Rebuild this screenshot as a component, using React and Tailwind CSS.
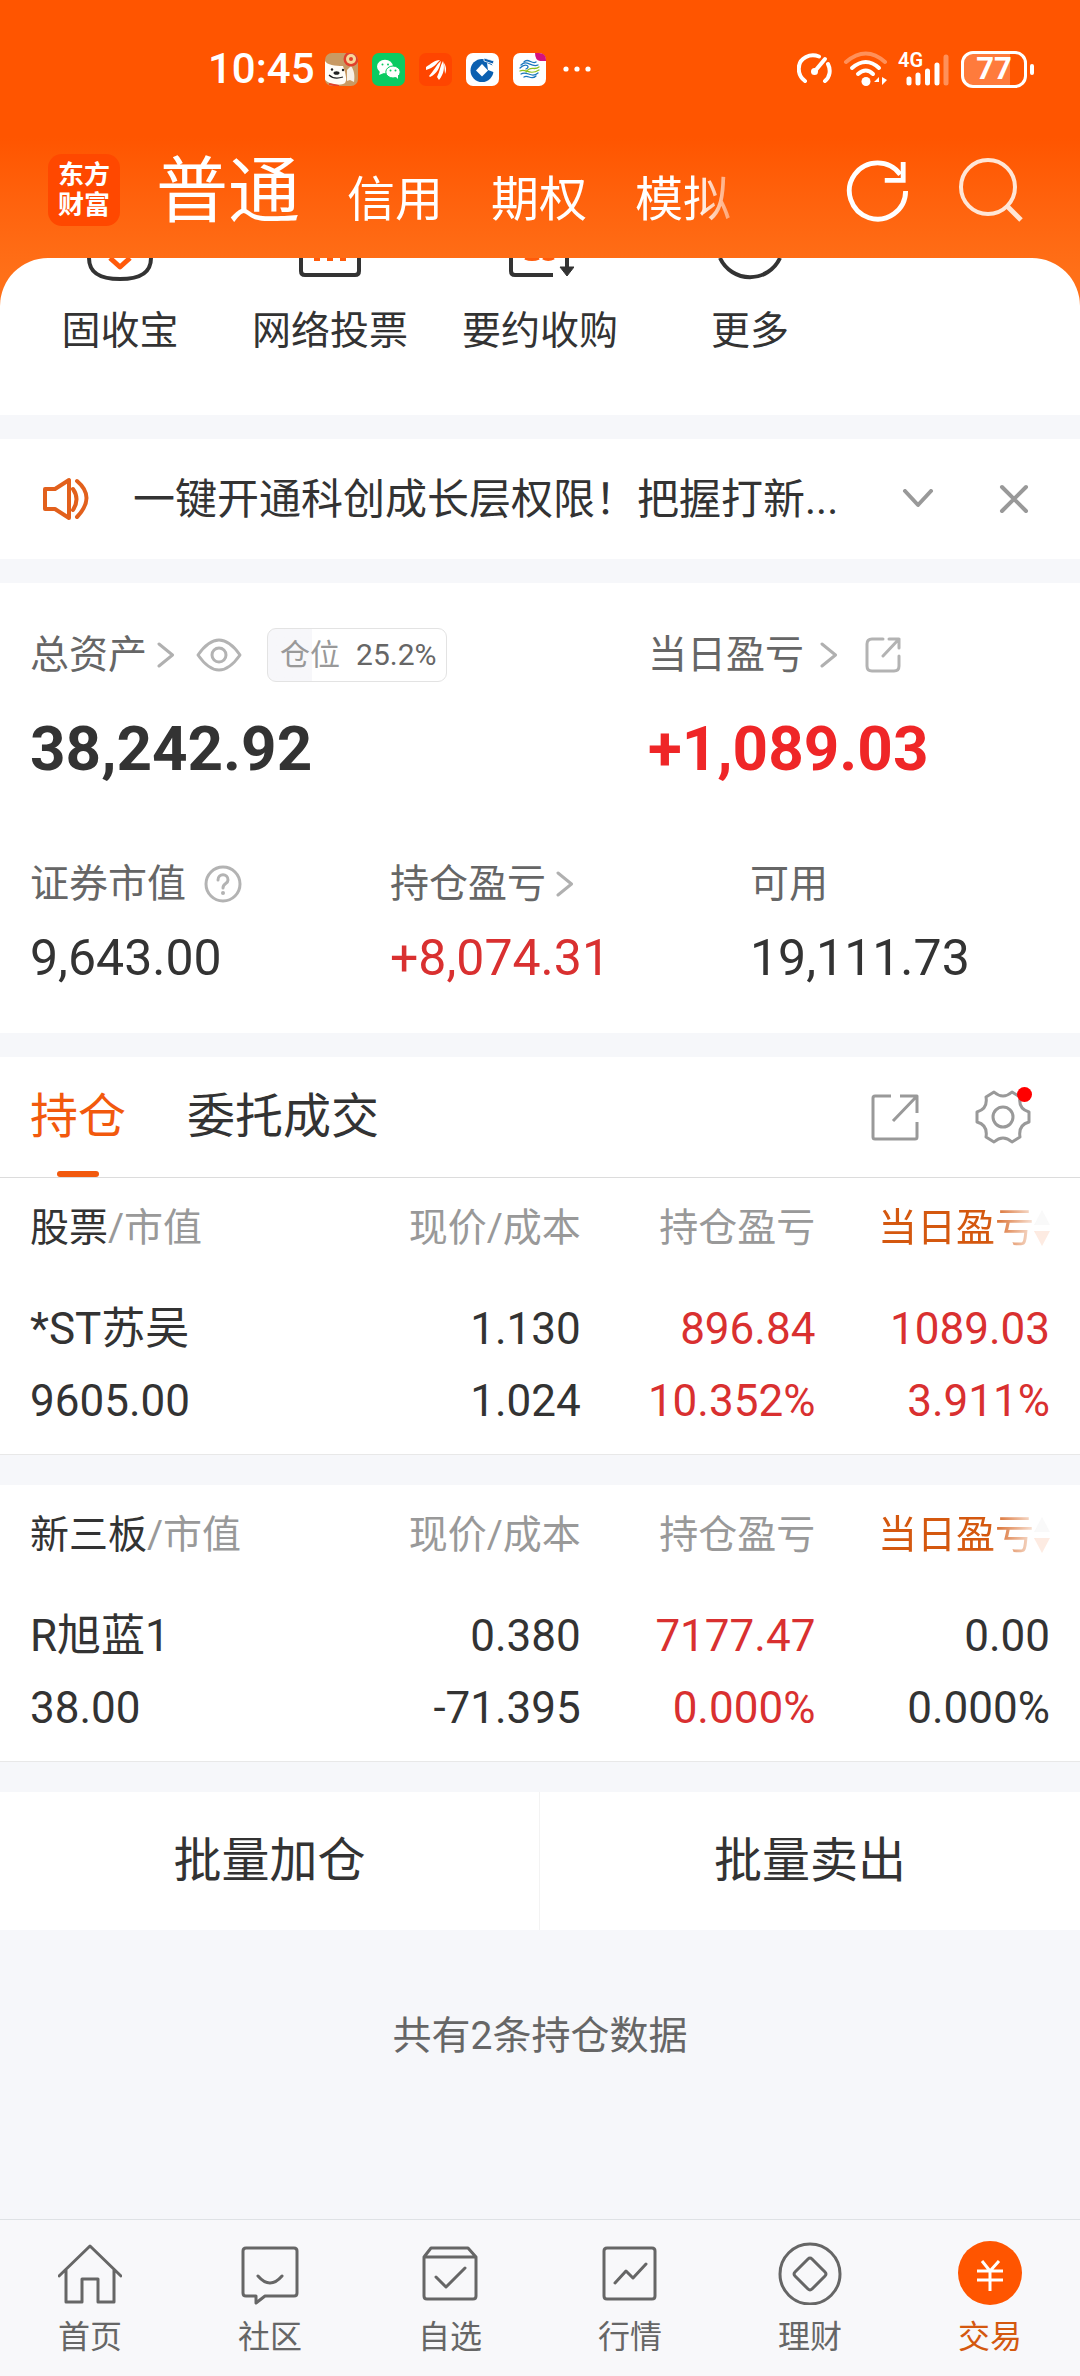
import React from "react";

const stroke = { fill: "none", strokeLinecap: "round", strokeLinejoin: "round" };

function Chevron() {
  return (
    <svg viewBox="0 0 18 26" className="h-[26px] w-[18px] shrink-0" stroke="#b0b0b0" strokeWidth="3" {...stroke}>
      <path d="M2 2 L15.5 13 L2 24" />
    </svg>
  );
}

function StatusBar() {
  return (
    <div className="flex h-[138px] items-center pr-[46px] pl-[208px] text-white">
      <time className="w-[108px] text-[42px] leading-[48px] font-medium">10:45</time>
      <div className="ml-[9px] flex items-center gap-[14px]">
        <svg viewBox="0 0 33 33" className="size-[33px]">
          <defs>
            <clipPath id="dog"><rect width="33" height="33" rx="7" /></clipPath>
          </defs>
          <g clipPath="url(#dog)">
            <rect width="33" height="33" fill="#c99a63" />
            <path d="M0 8 C2 12 10 13 18 13 L20 19 C21 24 22 27 20 30 C16 33 5 32 0 27Z" fill="#fffdf8" />
            <path d="M22 17 L26 13 C29 17 30 22 29 29 L25 27 L22 28Z" fill="#f8f1e8" />
            <circle cx="26" cy="6" r="7.5" fill="#e2402c" />
            <circle cx="26" cy="6" r="5" fill="#f6d79a" />
            <circle cx="26" cy="6" r="2" fill="#e2402c" />
            <ellipse cx="11.500" cy="20" rx="3" ry="1.800" fill="#222" />
            <circle cx="7" cy="16.500" r="1.200" fill="#222" />
            <circle cx="18" cy="17" r="1.200" fill="#222" />
            <path d="M4 22 Q9 27 18 24" stroke="#222" strokeWidth="1.200" fill="none" />
            <path d="M4 31 L14 33" stroke="#e2402c" strokeWidth="2" />
          </g>
        </svg>
        <svg viewBox="0 0 33 33" className="size-[33px]">
          <rect width="33" height="33" rx="7" fill="#0bcb62" />
          <ellipse cx="13" cy="13.500" rx="8" ry="6.800" fill="#fff" />
          <path d="M8 18 L7 22 L12 20Z" fill="#fff" />
          <ellipse cx="21" cy="19" rx="7.200" ry="6" fill="#fff" stroke="#0bcb62" />
          <path d="M23 23 L26 26 L26 22Z" fill="#fff" />
          <circle cx="10.500" cy="11.500" r="1" fill="#0bcb62" />
          <circle cx="16" cy="11.500" r="1" fill="#0bcb62" />
          <circle cx="18.500" cy="17.500" r="1" fill="#0bcb62" />
          <circle cx="23.500" cy="17.500" r="1" fill="#0bcb62" />
        </svg>
        <svg viewBox="0 0 33 33" className="size-[33px]">
          <rect width="33" height="33" rx="7" fill="#ff4500" />
          <g fill="#fff">
            <path d="M7 14 C12 11 15 7 21 7 C18 10 15 15 7 17Z" />
            <path d="M10 23 C15 18 17 12 22 8 C21 14 18 21 11 24Z" />
            <path d="M18 24 C21 18 21 13 24 8 C26 14 25 21 20 27Z" />
            <path d="M25 10 C28 14 27 19 26 21Z" />
          </g>
        </svg>
        <svg viewBox="0 0 33 33" className="size-[33px]">
          <rect width="33" height="33" rx="7" fill="#fff" />
          <circle cx="16" cy="17.500" r="11.500" fill="#0a5fb0" />
          <path d="M21 10 L30 14 L30 20 L22 17Z" fill="#fff" />
          <path d="M16 11 L22 17.500 L16 23.500 L10 17.500Z" fill="#fff" />
          <path d="M18 5 L28 8 L27 11 L18 8Z" fill="#0a5fb0" stroke="#fff" strokeWidth="0.800" />
        </svg>
        <svg viewBox="0 0 33 33" className="size-[33px]">
          <rect width="33" height="33" rx="7" fill="#fff" />
          <path d="M22 0 H26 Q33 0 33 7 V8 H27 Q22 7 22 0Z" fill="#d5127e" />
          <g fill="none" strokeWidth="1.300" strokeLinecap="round">
            <path d="M11 9 C15 4 19 12 23 9" stroke="#1b78bf" />
            <path d="M8 12 C14 6 18 15 25 12" stroke="#1b78bf" />
            <path d="M7 15 C13 9 18 14 13 16" stroke="#1b78bf" />
            <path d="M13 19 C18 12 21 18 26 14" stroke="#8cc220" />
            <path d="M7 18 C13 15 16 23 26 17" stroke="#8cc220" />
            <path d="M8 21 C14 17 18 26 25 20" stroke="#1b78bf" />
            <path d="M11 24 C15 21 18 28 23 23" stroke="#1b78bf" />
          </g>
        </svg>
      </div>
      <svg viewBox="0 0 28 6" className="ml-[17px] h-[6px] w-[28px]" fill="#fff">
        <circle cx="3" cy="3" r="2.600" /><circle cx="14" cy="3" r="2.600" /><circle cx="25" cy="3" r="2.600" />
      </svg>
      <div className="ml-auto flex items-center">
        <svg viewBox="0 0 36 32" className="h-[32px] w-[36px]" stroke="#fff" strokeWidth="4" {...stroke}>
          <path d="M8 28 C0 22 -1 9 9 4 C13 2 18 2 22 3.500 M31 11 C34 17 33 24 28 28" />
          <path d="M28 6 L18 18" strokeWidth="4" />
          <circle cx="17.500" cy="18.500" r="3.500" fill="#fff" stroke="none" />
        </svg>
        <svg viewBox="0 0 46 36" className="ml-[10px] h-[36px] w-[46px]" stroke="#fff" strokeWidth="4" {...stroke}>
          <path d="M3 11 Q23 -6 42 11" opacity="0.35" />
          <path d="M9 17 Q23 5 36 17" />
          <path d="M15 23 Q23 16 30 23" />
          <circle cx="23" cy="30.500" r="4.500" fill="#fff" stroke="none" />
          <path d="M36 26 L31 31 H36Z M39 26 V34 L44 29Z" fill="#fff" stroke="none" />
        </svg>
        <div className="relative ml-[8px] h-[36px] w-[52px]">
          <svg viewBox="0 0 52 36" className="h-full w-full" stroke="#fff" strokeWidth="5" strokeLinecap="round">
            <path d="M12 28 V32 M21 24 V32 M30.500 20 V32 M40 14 V32" />
            <path d="M49 6 V32" opacity="0.350" />
          </svg>
          <span className="absolute -top-[1px] left-[1px] text-[20px] leading-[20px] font-semibold">4G</span>
        </div>
        <div className="ml-[12px] flex h-[37px] w-[66px] items-center justify-center rounded-[12px] border-[3px] border-white bg-linear-to-r from-[#ff7b3c] from-77% to-transparent to-77% text-[31px] leading-[32px] font-bold">
          77
        </div>
        <span className="ml-[3px] h-[11px] w-[4px] rounded-full bg-white" />
      </div>
    </div>
  );
}

function AppHeader() {
  return (
    <header className="bg-linear-to-b from-[#ff5500] from-45% to-[#ff7018] to-90% pb-[48px]">
      <StatusBar />
      <div className="flex h-[120px] items-center pr-[56px] pl-[48px] text-white">
        <div className="-mt-[16px] flex size-[72px] flex-col items-center justify-center rounded-[14px] bg-[#ff4800] text-[26px] leading-[30px] font-bold">
          <span>东方</span>
          <span>财富</span>
        </div>
        <nav className="-mt-[12px] ml-[36px] flex items-baseline [mask-image:linear-gradient(to_right,black_94%,rgba(0,0,0,0.4))]">
          <a href="#normal" className="mr-[47px] text-[72px] leading-[120px]">普通</a>
          <a href="#credit" className="mr-[48px] text-[48px]">信用</a>
          <a href="#options" className="mr-[48px] text-[48px]">期权</a>
          <a href="#paper" className="text-[48px]">模拟</a>
        </nav>
        <button type="button" aria-label="刷新" className="-mt-[16px] ml-auto">
          <svg viewBox="0 0 66 66" className="size-[64px]" fill="none" stroke="#fff" strokeWidth="5">
            <path d="M62.500 34 A29 29 0 1 1 57 17" />
            <path d="M60 4 V23 H41" />
          </svg>
        </button>
        <button type="button" aria-label="搜索" className="-mt-[14px] ml-[49px]">
          <svg viewBox="0 0 66 66" className="size-[66px]" fill="none" stroke="#ffe6d6" strokeWidth="4">
            <circle cx="30" cy="29" r="27" />
            <path d="M49 48 L63 62" strokeWidth="5" />
          </svg>
        </button>
      </div>
    </header>
  );
}

const shortcuts = [
  {
    label: "固收宝",
    icon: (
      <>
        <path d="M3 0 C3 15 14 21 34 21 C54 21 65 15 65 0" stroke="#333" />
        <path d="M24 0 L34 9 L44 0" stroke="#ff5a0a" strokeWidth="5" />
      </>
    ),
  },
  {
    label: "网络投票",
    icon: (
      <>
        <path d="M5 0 V13 Q5 17 9 17 H59 Q63 17 63 13 V0" stroke="#333" />
        <path d="M21 0 V3 M34 0 V3 M47 0 V3" stroke="#ff5a0a" strokeWidth="6" />
      </>
    ),
  },
  {
    label: "要约收购",
    icon: (
      <>
        <path d="M5 0 V13 Q5 17 9 17 H47" stroke="#333" />
        <path d="M19 0 Q26 3 33 0 M37 0 Q42 3 48 0" stroke="#ff5a0a" strokeWidth="3" />
        <path d="M61 0 V12" stroke="#333" />
        <path d="M54 9 H68 L61 18Z" fill="#333" stroke="#333" strokeWidth="1" />
      </>
    ),
  },
  { label: "更多", icon: <path d="M4 0 A33 33 0 0 0 64 0" stroke="#333" /> },
];

function Shortcuts() {
  return (
    <section className="-mt-[48px] grid h-[157px] grid-cols-5 rounded-t-[48px] bg-white px-[15px]">
      {shortcuts.map((s) => (
        <a key={s.label} href="#service" className="flex flex-col items-center text-[39px] leading-[48px] text-[#333]">
          <svg viewBox="0 0 68 24" className="mb-[25px] h-[24px] w-[68px]" strokeWidth="4" {...stroke} strokeLinecap="butt">
            {s.icon}
          </svg>
          {s.label}
        </a>
      ))}
    </section>
  );
}

function Notice() {
  return (
    <section className="mt-[24px] flex h-[120px] items-center bg-white pr-[50px] pl-[42px]">
      <svg viewBox="0 0 48 44" className="h-[44px] w-[48px]" stroke="#e2601c" strokeWidth="4" {...stroke}>
        <path d="M3 12 H13 L27 3 V41 L13 32 H3Z" />
        <path d="M31 12 Q38 22 31 33 M35 4 Q54 20 35 40" />
      </svg>
      <p className="ml-[43px] pt-[2px] text-[42px] leading-[60px] whitespace-nowrap">一键开通科创成长层权限！把握打新...</p>
      <button type="button" aria-label="展开" className="ml-auto">
        <svg viewBox="0 0 32 20" className="h-[20px] w-[32px]" stroke="#999" strokeWidth="4" {...stroke}>
          <path d="M3 2 L16 16 L29 2" />
        </svg>
      </button>
      <button type="button" aria-label="关闭" className="ml-[64px]">
        <svg viewBox="0 0 32 32" className="size-[32px]" stroke="#999" strokeWidth="4" {...stroke}>
          <path d="M4 4 L28 28 M28 4 L4 28" />
        </svg>
      </button>
    </section>
  );
}

function Assets() {
  return (
    <section className="mt-[24px] bg-white pt-[42px] pb-[45px]">
      <div className="flex">
        <div className="w-3/5 pl-[30px]">
          <div className="flex h-[60px] items-center text-[39px] leading-[60px] text-[#666]">
            <a href="#assets" className="flex items-center gap-[10px]">
              总资产
              <Chevron />
            </a>
            <button type="button" aria-label="显示金额" className="ml-[21px]">
              <svg viewBox="0 0 46 34" className="h-[34px] w-[46px]" stroke="#b3b3b3" strokeWidth="3" {...stroke}>
                <path d="M2 17 Q23 -13 44 17 Q23 47 2 17Z" />
                <circle cx="23" cy="17" r="7" />
              </svg>
            </button>
            <div className="ml-[25px] flex h-[54px] items-center gap-[16px] rounded-[9px] border border-[#e3e3e3] bg-linear-to-r from-[#f7f7fa] from-25% to-white to-25% pr-[10px] pl-[12px] text-[30px] leading-[52px]">
              <span className="text-[#999]">仓位</span>
              <span>25.2%</span>
            </div>
          </div>
          <p className="mt-[28px] text-[62px] leading-[72px] font-bold">38,242.92</p>
        </div>
        <div className="w-2/5">
          <div className="flex h-[60px] items-center text-[39px] leading-[60px] text-[#666]">
            <a href="#today" className="flex items-center gap-[16px]">
              当日盈亏
              <Chevron />
            </a>
            <button type="button" aria-label="分享" className="ml-[27px]">
              <svg viewBox="0 0 36 36" className="size-[36px]" stroke="#b3b3b3" strokeWidth="3" {...stroke}>
                <path d="M18 2 H7 Q2 2 2 7 V29 Q2 34 7 34 H29 Q34 34 34 29 V19 M24 2 H34 V11 M34 2 L18 19" />
              </svg>
            </button>
          </div>
          <p className="mt-[28px] text-[62px] leading-[72px] font-bold text-[#ef2627]">+1,089.03</p>
        </div>
      </div>
      <div className="mt-[69px] grid grid-cols-3">
        <div className="pl-[30px]">
          <div className="flex h-[60px] items-center gap-[18px] text-[39px] text-[#666]">
            证券市值
            <button type="button" aria-label="说明">
              <svg viewBox="0 0 38 38" className="size-[38px]" stroke="#b3b3b3" strokeWidth="3" {...stroke}>
                <circle cx="19" cy="19" r="17" />
                <path d="M14 15 C14 8 24 8 24 15 C24 19 19 18 19 23" />
                <circle cx="19" cy="28" r="2" fill="#b3b3b3" stroke="none" />
              </svg>
            </button>
          </div>
          <p className="mt-[14px] text-[50px] leading-[60px]">9,643.00</p>
        </div>
        <div className="pl-[30px]">
          <a href="#pnl" className="flex h-[60px] items-center gap-[10px] text-[39px] text-[#666]">
            持仓盈亏
            <Chevron />
          </a>
          <p className="mt-[14px] text-[50px] leading-[60px] text-[#d93030]">+8,074.31</p>
        </div>
        <div className="pl-[30px]">
          <div className="flex h-[60px] items-center text-[39px] text-[#666]">可用</div>
          <p className="mt-[14px] text-[50px] leading-[60px]">19,111.73</p>
        </div>
      </div>
    </section>
  );
}

function HoldingTabs() {
  return (
    <div className="mt-[24px] flex h-[121px] items-center border-b border-[#dcdcdc] bg-white pr-[48px] pl-[30px] text-[48px] leading-[120px]">
      <button type="button" className="relative text-[#f2590d]">
        持仓
        <span className="absolute bottom-0 left-1/2 h-[6px] w-[42px] -translate-x-1/2 rounded-full bg-[#f2590d]" />
      </button>
      <button type="button" className="ml-[61px]">委托成交</button>
      <button type="button" aria-label="分享持仓" className="ml-auto">
        <svg viewBox="0 0 48 48" className="size-[48px]" fill="none" stroke="#999" strokeWidth="3" strokeLinejoin="round">
          <path d="M20 3 H4 Q2 3 2 5 V44 Q2 46 4 46 H44 Q46 46 46 44 V29 M29 3 H46 V20 M46 3 L22 28" />
        </svg>
      </button>
      <button type="button" aria-label="设置" className="relative ml-[55px]">
        <svg viewBox="-29 -29 58 58" className="size-[58px]" stroke="#999" strokeWidth="3" {...stroke}>
          <path d="M-9 -25 Q0 -17 9 -25 L17 -20 Q15 -8 26 -5 V5 Q15 8 17 20 L9 25 Q0 17 -9 25 L-17 20 Q-15 8 -26 5 V-5 Q-15 -8 -17 -20Z" />
          <circle r="10" />
        </svg>
        <span className="absolute -top-[1px] right-0 size-[15px] rounded-full bg-[#f00]" />
      </button>
    </div>
  );
}

const groups = [
  {
    title: "股票",
    rows: [
      ["*ST苏吴", "1.130", "896.84", "1089.03"],
      ["9605.00", "1.024", "10.352%", "3.911%"],
    ],
    todayUp: true,
  },
  {
    title: "新三板",
    rows: [
      ["R旭蓝1", "0.380", "7177.47", "0.00"],
      ["38.00", "-71.395", "0.000%", "0.000%"],
    ],
    todayUp: false,
  },
];

function Holdings({ group }) {
  const [top, bottom] = group.rows;
  const today = group.todayUp ? "text-[#d93030]" : "";
  return (
    <section className="border-b border-[#e8e8e8] bg-white px-[30px] pb-[17px]">
      <table className="w-full table-fixed text-right text-[44px] leading-[72px]">
        <thead>
          <tr className="h-[108px] text-[39px] leading-[100px] text-[#999]">
            <th className="w-[28%] pb-[8px] text-left font-normal"><span className="text-[#333]">{group.title}</span>/市值</th>
            <th className="w-[26%] pb-[8px] font-normal">现价/成本</th>
            <th className="w-[23%] pb-[8px] font-normal">持仓盈亏</th>
            <th className="w-[23%] pb-[8px] font-normal text-[#d4580f]">
              <button type="button" className="inline-flex items-center [mask-image:linear-gradient(to_right,black_64%,rgba(0,0,0,0.12)_92%)]">
                当日盈亏
                <svg viewBox="0 0 16 36" className="h-[36px] w-[16px]">
                  <path d="M8 0 L16 15 H0Z" fill="#ccc" />
                  <path d="M8 36 L16 21 H0Z" fill="#f2590d" />
                </svg>
              </button>
            </th>
          </tr>
        </thead>
        <tbody>
          <tr className="h-[79px]">
            <td className="p-0 pt-[7px] text-left">{top[0]}</td>
            <td className="p-0 pt-[7px]">{top[1]}</td>
            <td className="p-0 pt-[7px] text-[#d93030]">{top[2]}</td>
            <td className={`p-0 pt-[7px] ${today}`}>{top[3]}</td>
          </tr>
          <tr className="h-[72px]">
            <td className="p-0 text-left">{bottom[0]}</td>
            <td className="p-0">{bottom[1]}</td>
            <td className="p-0 text-[#d93030]">{bottom[2]}</td>
            <td className={`p-0 ${today}`}>{bottom[3]}</td>
          </tr>
        </tbody>
      </table>
    </section>
  );
}

const tabs = [
  { label: "首页", icon: <path d="M1 35 L32 5 L63 35 M8 29 V61 H24 V38 H40 V61 H56 V29" /> },
  { label: "社区", icon: <path d="M8 7 H56 Q59 7 59 10 V52 Q59 55 56 55 H27 L18 62 V55 H8 Q5 55 5 52 V10 Q5 7 8 7Z M20 35 Q32 49 44 35" /> },
  { label: "自选", icon: <path d="M6 16 L13 7 H50 L58 16 V55 Q58 58 55 58 H9 Q6 58 6 55Z M6 16 H58 M18 36 L28 46 L47 27" /> },
  { label: "行情", icon: <path d="M9 7 H54 Q57 7 57 10 V55 Q57 58 54 58 H9 Q6 58 6 55 V10 Q6 7 9 7Z M17 42 L28 30 L35 37 L48 23" /> },
  { label: "理财", icon: <><circle cx="32" cy="33" r="30" /><path d="M30 18 Q32 16 34 18 L47 31 Q49 33 47 35 L34 48 Q32 50 30 48 L17 35 Q15 33 17 31Z" /></> },
  {
    label: "交易",
    active: true,
    icon: (
      <>
        <circle cx="32" cy="32" r="32" fill="#ff5500" stroke="none" />
        <path d="M24 20 L32 30 L41 20 M19 30 H45 M19 39 H45 M32 30 V50" stroke="#fff" strokeLinecap="butt" />
      </>
    ),
  },
];

function TabBar() {
  return (
    <nav className="mt-auto grid h-[157px] grid-cols-6 border-t border-[#dfe2e5] bg-[#f8f8fa]">
      {tabs.map((t) => (
        <a
          key={t.label}
          href="#tab"
          className={`flex flex-col items-center pt-[21px] text-[32px] leading-[44px] ${t.active ? "text-[#d4580f]" : "text-[#666]"}`}
        >
          <svg viewBox="0 0 64 64" className="mb-[10px] size-[64px]" stroke="#666" strokeWidth="3" {...stroke}>
            {t.icon}
          </svg>
          {t.label}
        </a>
      ))}
    </nav>
  );
}

export default function App() {
  return (
    <div className="flex min-h-screen w-full flex-col bg-[#f6f7fa] font-[Roboto,'Noto_Sans_CJK_SC',sans-serif] text-[#333]">
      <AppHeader />
      <Shortcuts />
      <Notice />
      <Assets />
      <HoldingTabs />
      <div className="flex flex-col gap-[30px]">
        {groups.map((g) => (
          <Holdings key={g.title} group={g} />
        ))}
        <div className="grid grid-cols-2 divide-x divide-[#f3f3f3] bg-white text-[48px] leading-[138px]">
          <button type="button">批量加仓</button>
          <button type="button">批量卖出</button>
        </div>
      </div>
      <p className="mt-[76px] text-center text-[39px] leading-[60px] text-[#666]">共有2条持仓数据</p>
      <TabBar />
    </div>
  );
}
